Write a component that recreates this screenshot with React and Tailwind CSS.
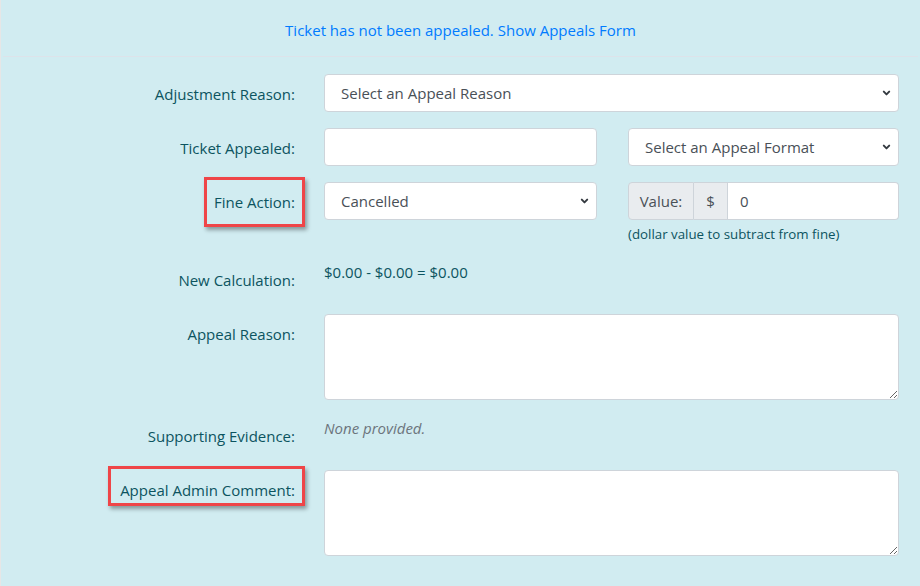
const font = { fontFamily: '"Open Sans", "Noto Sans", sans-serif' }

function Chevron() {
  return (
    <svg
      className="absolute right-[7px] top-1/2 -translate-y-1/2 w-[9px] h-[9px] text-[#343a40]"
      viewBox="0 0 10 10"
      fill="none"
      stroke="currentColor"
      strokeWidth="2.2"
      strokeLinecap="round"
      strokeLinejoin="round"
    >
      <path d="M2 3.5 L5 6.5 L8 3.5" />
    </svg>
  )
}

function FakeSelect({ value, className = '' }) {
  return (
    <div
      className={`relative h-[38px] bg-white border border-[#ced4da] rounded-[4px] flex items-center pl-[16px] text-[#495057] ${className}`}
    >
      {value}
      <Chevron />
    </div>
  )
}

function Label({ children, box }) {
  return (
    <div className="w-[294px] shrink-0 text-right pt-[8px] pb-[6px] leading-6 text-[#0c5460]">
      <span className="relative inline-block">
        {children}
        {box === 'fine' && (
          <span className="absolute left-[-10px] right-[-10px] top-[-13px] bottom-[-13px] border-[3px] border-[#ef4548] shadow-[2px_3px_4px_rgba(0,0,0,0.35)]" />
        )}
        {box === 'admin' && (
          <span className="absolute left-[-12px] right-[-10px] top-[-12px] bottom-[-4px] border-[3px] border-[#ef4548] shadow-[2px_3px_4px_rgba(0,0,0,0.35)]" />
        )}
      </span>
    </div>
  )
}

function Row({ label, box, children }) {
  return (
    <div className="flex mb-4">
      <Label box={box}>{label}</Label>
      <div className="ml-[29px] w-[575px]">{children}</div>
    </div>
  )
}

export default function App() {
  return (
    <div
      className="w-[920px] h-[586px] bg-[#d1ecf1] border-l border-[#e6e6e6] overflow-hidden text-[15px]"
      style={font}
    >
      <div className="h-[57px] pt-[4px] flex items-center justify-center border-b border-[#dde3ea] mx-[2px]">
        <a className="text-[#007bff]">Ticket has not been appealed. Show Appeals Form</a>
      </div>

      <div className="pt-[17px]">
        <Row label="Adjustment Reason:">
          <FakeSelect value="Select an Appeal Reason" />
        </Row>

        <Row label="Ticket Appealed:">
          <div className="flex gap-[31px]">
            <div className="w-[273px] h-[38px] bg-white border border-[#ced4da] rounded-[4px]" />
            <FakeSelect value="Select an Appeal Format" className="w-[271px]" />
          </div>
        </Row>

        <Row label="Fine Action:" box="fine">
          <div className="flex gap-[31px]">
            <FakeSelect value="Cancelled" className="w-[273px]" />
            <div className="w-[271px]">
              <div className="flex h-[38px]">
                <div className="w-[66px] flex items-center justify-center bg-[#e9ecef] border border-[#ced4da] rounded-l-[4px] text-[#495057]">
                  Value:
                </div>
                <div className="w-[34px] flex items-center justify-center bg-[#e9ecef] border border-l-0 border-[#ced4da] text-[#495057]">
                  $
                </div>
                <div className="flex-1 flex items-center pl-[12px] bg-white border border-l-0 border-[#ced4da] rounded-r-[4px] text-[#495057]">
                  0
                </div>
              </div>
              <div className="mt-[4px] text-[13.3px] leading-[20px] text-[#0c5460]">
                (dollar value to subtract from fine)
              </div>
            </div>
          </div>
        </Row>

        <Row label="New Calculation:">
          <div className="leading-6 text-[#0c5460]">$0.00 - $0.00 = $0.00</div>
        </Row>

        <Row label="Appeal Reason:">
          <textarea className="block w-full h-[86px] bg-white border border-[#ced4da] rounded-[4px] resize-y outline-none" />
        </Row>

        <Row label="Supporting Evidence:">
          <div className="leading-6 italic text-[#6c757d]">None provided.</div>
        </Row>

        <Row label="Appeal Admin Comment:" box="admin">
          <textarea className="block w-full h-[86px] bg-white border border-[#ced4da] rounded-[4px] resize-y outline-none" />
        </Row>
      </div>
    </div>
  )
}
